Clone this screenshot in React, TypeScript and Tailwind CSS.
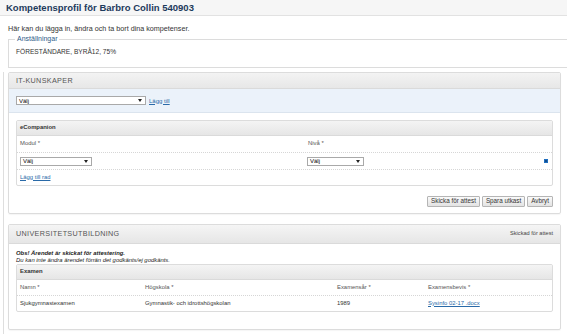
import React from "react";

function Select({ w }: { w: string }) {
  return (
    <div className={`${w} h-[9px] border border-[#a9a9a9] bg-white flex items-center justify-between pl-[2px] pr-[3px] text-[6px] leading-none text-black`}>
      <span>Välj</span>
      <svg width="4" height="3" viewBox="0 0 4 3"><path d="M0 0H4L2 3Z" fill="#222" /></svg>
    </div>
  );
}

function DelIcon() {
  return (
    <svg width="4" height="4" viewBox="0 0 5 5">
      <rect x="0" y="0" width="5" height="5" fill="#1f6fc0" />
      <path d="M1.2 1.2L3.8 3.8M3.8 1.2L1.2 3.8" stroke="#0d3f78" strokeWidth="0.9" />
    </svg>
  );
}

function Btn({ children }: { children: React.ReactNode }) {
  return (
    <div className="h-[11px] px-[3px] flex items-center border border-[#b5b5b5] bg-linear-to-b from-[#fafafa] to-[#e3e3e3] text-[6.3px] leading-none text-[#333] rounded-[1px]">
      {children}
    </div>
  );
}

export default function App() {
  return (
    <div className="w-[567px] h-[334px] overflow-hidden bg-white text-[#333] font-['Liberation_Sans',Arial,sans-serif]">
      <div className="h-[16px] bg-[#f6f6f6] border-b border-[#e2e2e2] px-[6px] flex items-center text-[9.5px] font-bold text-[#1d3a5c] leading-none">
        Kompetensprofil för Barbro Collin 540903
      </div>
      <div className="pl-[8px] pt-[9px] text-[7.2px] leading-[8px]">
        Här kan du lägga in, ändra och ta bort dina kompetenser.
      </div>
      <fieldset className="mt-[2px] ml-[8px] w-[600px] border border-[#dcdcdc] pb-[11px]">
        <legend className="ml-[6px] px-[2px] text-[7px] leading-[8px] text-[#2f5b88]">Anställningar</legend>
        <div className="pl-[7px] pt-[5px] text-[6.6px] leading-[8px]">FÖRESTÄNDARE, BYRÅ12, 75%</div>
      </fieldset>

      <div className="mt-[2px] ml-[3px] border-l border-[#dedede] pl-[4px] pb-[20px]">
        {/* IT-KUNSKAPER */}
        <div className="mt-[4px] w-[553px] border border-[#dcdcdc] rounded-[2px] shadow-[0_1px_1px_rgba(0,0,0,0.04)]">
          <div className="h-[16px] border-b border-[#dadada] bg-linear-to-b from-[#f3f3f3] to-[#e7e7e7] flex items-center pl-[7px] text-[7.2px] tracking-[0.35px] text-[#555] leading-none">
            IT-KUNSKAPER
          </div>
          <div className="h-[24px] border-b border-[#dbe4ee] bg-[#ebf2fa] flex items-center pl-[7px]">
            <Select w="w-[130px]" />
            <a className="ml-[3px] text-[6px] leading-none text-[#2a6aa8] underline">Lägg till</a>
          </div>
          <div className="mt-[7px] mx-[7px] border border-[#dcdcdc] rounded-[2px]">
            <div className="h-[15px] border-b border-[#dadada] bg-linear-to-b from-[#f4f4f4] to-[#e6e6e6] flex items-center pl-[3px] text-[5.9px] font-bold text-[#333] leading-none">
              eCompanion
            </div>
            <div className="h-[17px] border-b border-dotted border-[#d6d6d6] flex items-center pl-[3px] text-[5.9px] text-[#555] leading-none">
              <div className="w-[288px]">Modul *</div>
              <div>Nivå *</div>
            </div>
            <div className="h-[17px] border-b border-dotted border-[#d6d6d6] flex items-center pl-[3px] pr-[4px]">
              <div className="w-[287px]"><Select w="w-[72px]" /></div>
              <div className="flex-1"><Select w="w-[57px]" /></div>
              <DelIcon />
            </div>
            <div className="h-[15px] flex items-center pl-[3px]">
              <a className="text-[5.9px] leading-none text-[#2a6aa8] underline">Lägg till rad</a>
            </div>
          </div>
          <div className="mt-[10px] pb-[6px] pr-[7px] flex justify-end gap-[2px]">
            <Btn>Skicka för attest</Btn>
            <Btn>Spara utkast</Btn>
            <Btn>Avbryt</Btn>
          </div>
        </div>

        {/* UNIVERSITETSUTBILDNING */}
        <div className="mt-[10px] w-[553px] border border-[#dcdcdc] rounded-[2px] shadow-[0_1px_1px_rgba(0,0,0,0.04)]">
          <div className="h-[19px] border-b border-[#dadada] bg-linear-to-b from-[#f5f5f5] to-[#e6e6e6] flex items-center justify-between pl-[7px] pr-[7px] leading-none">
            <span className="text-[7.2px] tracking-[0.35px] text-[#555]">UNIVERSITETSUTBILDNING</span>
            <span className="text-[5.6px] text-[#444]">Skickad för attest</span>
          </div>
          <div className="pl-[7px] pt-[6px] text-[5.9px] leading-[7px] italic text-[#222]">
            <div className="font-bold">Obs! Ärendet är skickat för attestering.</div>
            <div>Du kan inte ändra ärendet förrän det godkänts/ej godkänts.</div>
          </div>
          <div className="mx-[7px] border border-[#dcdcdc] rounded-[2px]">
            <div className="h-[15px] border-b border-[#dadada] bg-linear-to-b from-[#f4f4f4] to-[#e6e6e6] flex items-center pl-[3px] text-[5.9px] font-bold text-[#333] leading-none">
              Examen
            </div>
            <div className="h-[16px] border-b border-dotted border-[#d6d6d6] grid grid-cols-[125px_192px_91px_1fr] items-center pl-[3px] text-[5.9px] text-[#555] leading-none">
              <div>Namn *</div>
              <div>Högskola *</div>
              <div>Examensår *</div>
              <div>Examensbevis *</div>
            </div>
            <div className="h-[15px] grid grid-cols-[125px_192px_91px_1fr] items-center pl-[3px] text-[5.9px] text-[#333] leading-none">
              <div>Sjukgymnastexamen</div>
              <div>Gymnastik- och idrottshögskolan</div>
              <div>1989</div>
              <div><a className="text-[#2a6aa8] underline">Sysinfo 02-17 .docx</a></div>
            </div>
          </div>
          <div className="h-[17px]" />
        </div>
      </div>
    </div>
  );
}
